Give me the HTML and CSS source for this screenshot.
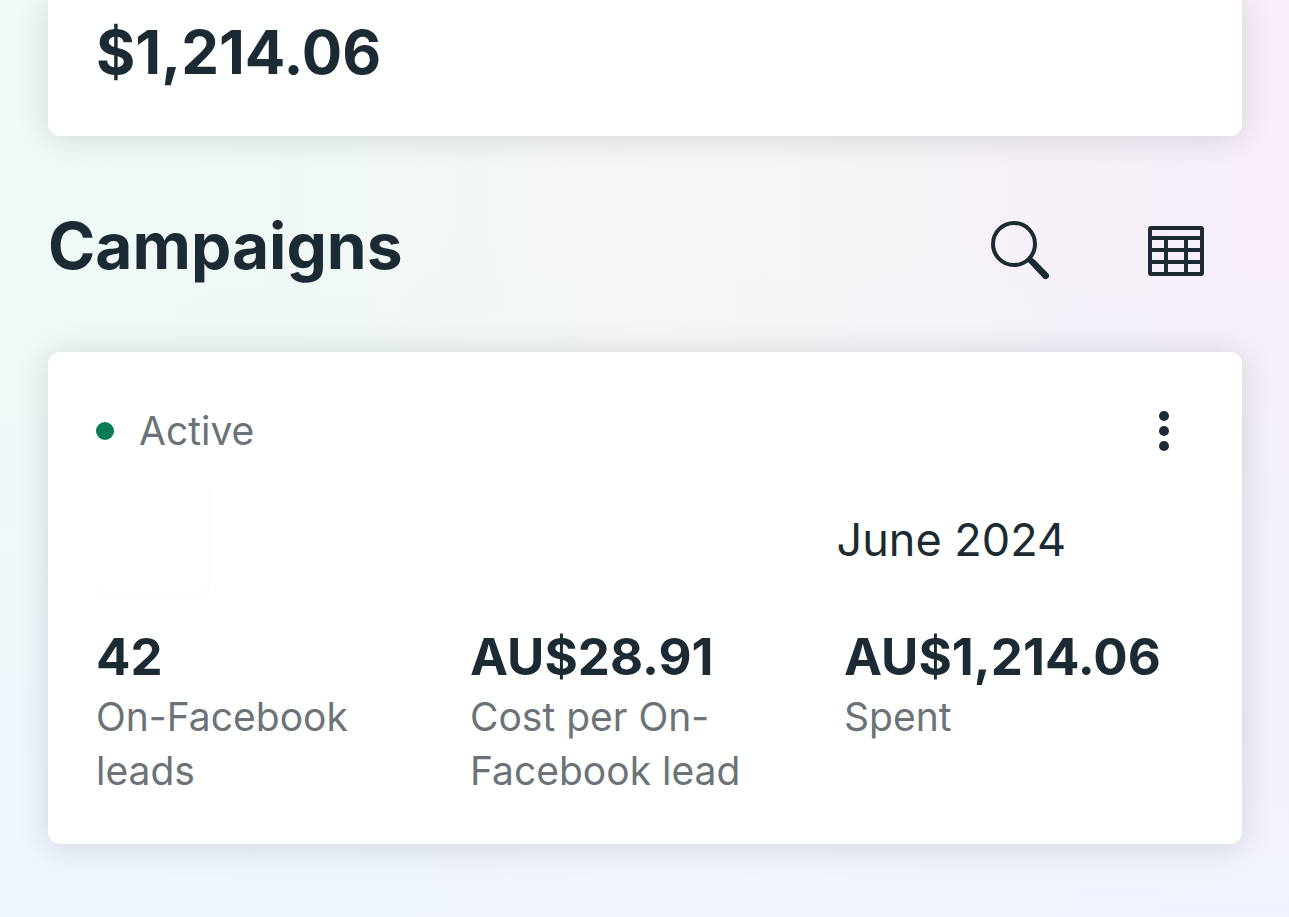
FILE: index.html
```html
<!DOCTYPE html>
<html lang="en">
<head>
<meta charset="utf-8">
<meta name="viewport" content="width=device-width, initial-scale=1">
<title>Campaigns</title>
<link rel="stylesheet" href="styles.css">
</head>
<body>
<main class="page">
  <section class="card card-summary" aria-label="Total spent">
    <p class="total">$1,214.06</p>
  </section>

  <header class="section-header">
    <h1 class="section-title">Campaigns</h1>
    <div class="actions">
      <button class="icon-button" type="button" aria-label="Search">
        <svg width="60" height="60" viewBox="0 0 60 60" fill="none" stroke="currentColor">
          <circle cx="24" cy="23" r="21" stroke-width="4"/>
          <path d="M36.5 39.5L40.5 35.5L45 39L58 52.3A3.1 3.1 0 0 1 53.3 57.2L40 43Z" fill="currentColor" stroke="none"/>
        </svg>
      </button>
      <button class="icon-button" type="button" aria-label="Table view">
        <svg width="56" height="50" viewBox="0 0 56 50" fill="none" stroke="currentColor" stroke-width="4">
          <rect x="2" y="2" width="52" height="46" rx="1"/>
          <path d="M2 12H54M2 24H54M2 36H54M18 12V48M38 12V48"/>
        </svg>
      </button>
    </div>
  </header>

  <article class="card card-campaign">
    <div class="status-row">
      <span class="status"><span class="status-dot"></span>Active</span>
      <button class="icon-button" type="button" aria-label="More options">
        <svg width="12" height="40" viewBox="0 0 12 40" fill="currentColor">
          <circle cx="6" cy="5" r="5"/><circle cx="6" cy="20" r="5"/><circle cx="6" cy="35" r="5"/>
        </svg>
      </button>
    </div>
    <div class="name-row">
      <span class="thumbnail"></span>
      <h2 class="campaign-name">June 2024</h2>
    </div>
    <dl class="metrics">
      <div class="metric"><dd class="value">42</dd><dt class="label">On-Facebook leads</dt></div>
      <div class="metric"><dd class="value">AU$28.91</dd><dt class="label">Cost per On-Facebook lead</dt></div>
      <div class="metric"><dd class="value">AU$1,214.06</dd><dt class="label">Spent</dt></div>
    </dl>
  </article>
</main>
</body>
</html>
```
FILE: styles.css
```css
* {
  box-sizing: border-box;
}

body {
  margin: 0;
  min-height: 100vh;
  color: #1c2b33;
  font-family: Inter, "Noto Sans", sans-serif;
  background:
    linear-gradient(to bottom, rgba(239, 244, 254, 0) 25%, rgba(239, 244, 254, 0.85) 100%),
    linear-gradient(to right, #effaf7 0%, #f1f8f5 30%, #f6f6f7 55%, #f6f0f8 85%, #f7eefa 100%);
}

.page {
  padding: 0 47px 72px 48px;
}

.card {
  background: #fff;
  border-radius: 12px;
  box-shadow: 0 2px 32px rgba(28, 30, 33, 0.15);
}

.card-summary {
  border-radius: 0 0 12px 12px;
  padding: 12px 48px 44px;
}

.total {
  margin: 0;
  font-size: 60px;
  font-weight: 700;
  line-height: 80px;
}

.section-header {
  display: flex;
  align-items: center;
  justify-content: space-between;
  padding: 62px 38px 58px 0;
}

.section-title {
  margin: 0;
  font-size: 64px;
  font-weight: 700;
  line-height: 96px;
}

.actions {
  display: flex;
  align-items: center;
  gap: 98px;
  padding-top: 10px;
}

.icon-button {
  display: flex;
  padding: 0;
  border: 0;
  background: none;
  color: inherit;
  cursor: pointer;
}

.card-campaign {
  padding: 52px 48px 46px;
}

.status-row {
  display: flex;
  align-items: center;
  justify-content: space-between;
  padding-right: 24px;
}

.status {
  display: flex;
  align-items: center;
  gap: 25px;
  color: #6b7378;
  font-size: 39px;
  line-height: 54px;
}

.status-dot {
  width: 18px;
  height: 18px;
  border-radius: 50%;
  background: #0a7c5a;
}

.name-row {
  display: flex;
  align-items: center;
  justify-content: space-between;
  padding: 24px 128px 26px 0;
}

.thumbnail {
  width: 116px;
  height: 116px;
  border-radius: 16px;
  box-shadow: inset -2px -4px 6px #fdfafa;
}

.campaign-name {
  margin: 0;
  font-size: 45px;
  font-weight: 400;
  line-height: 60px;
}

.metrics {
  display: grid;
  grid-template-columns: repeat(3, minmax(0, 1fr));
  gap: 24px;
  margin: 0;
}

.value {
  margin: 0;
  font-size: 51px;
  font-weight: 700;
  line-height: 66px;
}

.label {
  padding-right: 48px;
  color: #6b7378;
  font-size: 39px;
  line-height: 54px;
}
```
